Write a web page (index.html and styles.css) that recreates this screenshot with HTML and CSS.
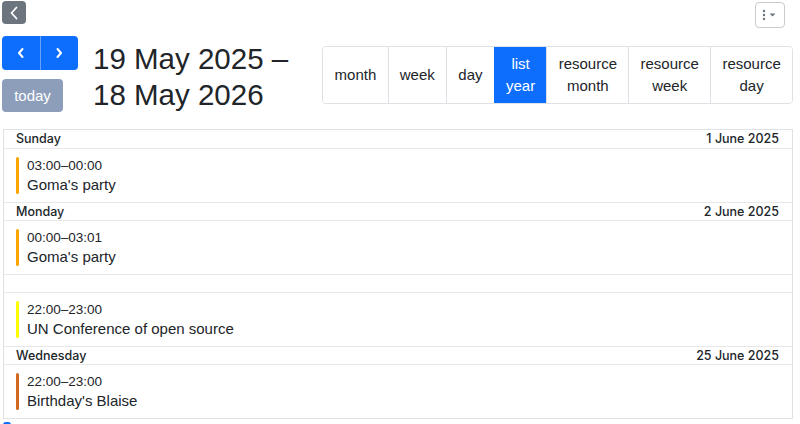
FILE: index.html
```html
<!DOCTYPE html>
<html>
<head>
    <link rel="stylesheet" href="styles.css">
</head>
<body>
    <div class="topbar">
        <button class="btn-back" aria-label="Back">
            <svg width="10" height="14" viewBox="0 0 10 14"><path d="M7.5 1.5 L2.5 7 L7.5 12.5" fill="none" stroke="#fff" stroke-width="1.8" stroke-linecap="round" stroke-linejoin="round"/></svg>
        </button>
        <button class="btn-menu" aria-label="Options">
            <svg width="18" height="12" viewBox="0 0 18 12"><circle cx="3" cy="2" r="1.2" fill="#6c757d"/><circle cx="3" cy="6" r="1.2" fill="#6c757d"/><circle cx="3" cy="10" r="1.2" fill="#6c757d"/><path d="M8.5 4.5 L14.5 4.5 L11.5 7.5 Z" fill="#6c757d"/></svg>
        </button>
    </div>

    <div class="toolbar">
        <div class="nav-col">
            <div class="nav-group">
                <button class="btn-nav" aria-label="Previous">
                    <svg width="8" height="12" viewBox="0 0 8 12"><path d="M5.5 2 L2 6 L5.5 10" fill="none" stroke="#fff" stroke-width="2" stroke-linecap="round" stroke-linejoin="round"/></svg>
                </button>
                <button class="btn-nav" aria-label="Next">
                    <svg width="8" height="12" viewBox="0 0 8 12"><path d="M2.5 2 L6 6 L2.5 10" fill="none" stroke="#fff" stroke-width="2" stroke-linecap="round" stroke-linejoin="round"/></svg>
                </button>
            </div>
            <button class="btn-today">today</button>
        </div>
        <h2 class="title">19 May 2025 –<br>18 May 2026</h2>
        <div class="view-group">
            <button class="view-btn">month</button>
            <button class="view-btn">week</button>
            <button class="view-btn">day</button>
            <button class="view-btn active">list<br>year</button>
            <button class="view-btn">resource<br>month</button>
            <button class="view-btn">resource<br>week</button>
            <button class="view-btn">resource<br>day</button>
        </div>
    </div>

    <div class="list">
        <div class="day-head"><span>Sunday</span><span>1 June 2025</span></div>
        <div class="event">
            <div class="bar" style="background:#ffa500"></div>
            <div class="event-body">
                <div class="time">03:00–00:00</div>
                <div class="name">Goma's party</div>
            </div>
        </div>
        <div class="day-head"><span>Monday</span><span>2 June 2025</span></div>
        <div class="event">
            <div class="bar" style="background:#ffa500"></div>
            <div class="event-body">
                <div class="time">00:00–03:01</div>
                <div class="name">Goma's party</div>
            </div>
        </div>
        <div class="day-head"><span></span><span></span></div>
        <div class="event">
            <div class="bar" style="background:#ffff00"></div>
            <div class="event-body">
                <div class="time">22:00–23:00</div>
                <div class="name">UN Conference of open source</div>
            </div>
        </div>
        <div class="day-head"><span>Wednesday</span><span>25 June 2025</span></div>
        <div class="event">
            <div class="bar" style="background:#d2691e"></div>
            <div class="event-body">
                <div class="time">22:00–23:00</div>
                <div class="name">Birthday's Blaise</div>
            </div>
        </div>
    </div>
    <div class="check"></div>
</body>
</html>
```

FILE: styles.css
```css
body {
    margin: 0;
    padding: 1px 7px 0 2px;
    font-family: "Liberation Sans", Arial, sans-serif;
    color: #212529;
    background: #fff;
    overflow: hidden;
}

button {
    font-family: inherit;
    cursor: pointer;
}

.topbar {
    display: flex;
    justify-content: space-between;
    align-items: flex-start;
    height: 35px;
}

.btn-back {
    width: 24px;
    height: 23px;
    padding: 0;
    border: none;
    border-radius: 4px;
    background: #6c757d;
    display: flex;
    align-items: center;
    justify-content: center;
}

.btn-menu {
    width: 30px;
    height: 26px;
    margin-top: 1px;
    margin-right: 8px;
    padding: 0;
    border: 1px solid #c8cbcf;
    border-radius: 4px;
    background: #fff;
    display: flex;
    align-items: center;
    justify-content: center;
}

.toolbar {
    display: flex;
    align-items: center;
    height: 76px;
}

.nav-col {
    display: flex;
    flex-direction: column;
    gap: 9px;
    width: 76px;
}

.nav-group {
    display: flex;
    width: 76px;
    height: 34px;
}

.btn-nav {
    flex: 1;
    padding: 0;
    border: none;
    background: #0d6efd;
    display: flex;
    align-items: center;
    justify-content: center;
}

.btn-nav:first-child {
    border-radius: 4px 0 0 4px;
    border-right: 1px solid #6aa2f5;
}

.btn-nav:last-child {
    border-radius: 0 4px 4px 0;
}

.btn-today {
    width: 61px;
    height: 33px;
    padding: 0;
    border: none;
    border-radius: 4px;
    background: #8d9ebb;
    color: #fff;
    font-size: 15px;
}

.title {
    margin: 0 0 0 15px;
    padding-top: 5px;
    font-size: 29.5px;
    font-weight: normal;
    line-height: 36px;
    color: #212529;
    flex: 1;
}

.view-group {
    display: flex;
    height: 56px;
    margin-top: 1px;
    border: 1px solid #dee2e6;
    border-radius: 4px;
    overflow: hidden;
}

.view-btn {
    padding: 0 11.25px;
    border: none;
    border-left: 1px solid #dee2e6;
    background: #fff;
    color: #212529;
    font-size: 15px;
    line-height: 22px;
}

.view-btn:first-child {
    border-left: none;
}

.view-btn.active {
    background: #0d6efd;
    color: #fff;
    border-left-color: #0d6efd;
}

.list {
    margin: 17px 0 0 1px;
    border: 1px solid #dee2e6;
}

.day-head {
    display: flex;
    justify-content: space-between;
    height: 17px;
    padding: 0 13px 0 12px;
    border-top: 1px solid #e8e8e8;
    border-bottom: 1px solid #e8e8e8;
    font-family: Inter, "Liberation Sans", sans-serif;
    font-size: 12.5px;
    line-height: 17px;
    font-weight: 500;
    color: #212529;
}

.day-head:first-child {
    border-top: none;
    height: 18px;
    line-height: 18px;
}

.event {
    display: flex;
    height: 53px;
    padding: 8px 0 0 12px;
    box-sizing: border-box;
    gap: 8px;
}

.bar {
    width: 3px;
    height: 37px;
    border-radius: 2px;
}

.time {
    font-size: 13.5px;
    line-height: 18px;
}

.name {
    font-size: 15px;
    line-height: 20px;
}

.check {
    width: 8px;
    height: 13px;
    margin: 3px 0 0 1px;
    background: #0d6efd;
    border-radius: 3px;
}
```
